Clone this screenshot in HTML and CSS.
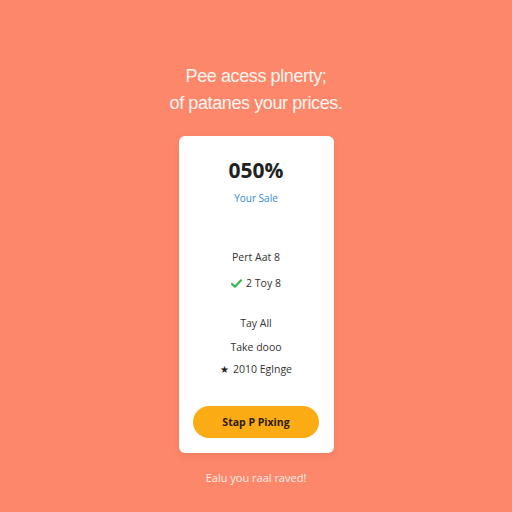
FILE: index.html
```html
<!DOCTYPE html>
<html>
<head>
<meta charset="utf-8">
<link rel="stylesheet" href="styles.css">
</head>
<body>
<main class="page">
  <h1 class="headline">Pee acess plnerty;<br>of patanes your prices.</h1>
  <section class="card">
    <div class="price">050%</div>
    <div class="sale">Your Sale</div>
    <ul class="list first">
      <li>Pert Aat 8</li>
      <li><svg class="check" viewBox="0 0 12 10" width="11" height="9"><path d="M1 5.5 L4.2 8.5 L11 1.5" fill="none" stroke="#3bb54a" stroke-width="2.4" stroke-linecap="round" stroke-linejoin="round"/></svg>2 Toy 8</li>
    </ul>
    <ul class="list second">
      <li>Tay All</li>
      <li>Take dooo</li>
      <li class="tight"><span class="star">&#9733;</span>2010 Eglnge</li>
    </ul>
    <button class="cta">Stap P Pixing</button>
  </section>
  <p class="foot">Ealu you raal raved!</p>
</main>
</body>
</html>
```
FILE: styles.css
```css
html, body {
  margin: 0;
  padding: 0;
}
body {
  background: #fd876b;
  font-family: "Open Sans", "Liberation Sans", sans-serif;
  width: 512px;
  height: 512px;
  overflow: hidden;
}
.page {
  display: flex;
  flex-direction: column;
  align-items: center;
  padding-top: 63px;
}
.headline {
  margin: 0;
  color: #fff5f0;
  font-family: "Liberation Sans", Arial, sans-serif;
  font-weight: 400;
  font-size: 18px;
  letter-spacing: -0.4px;
  line-height: 27px;
  text-align: center;
}
.card {
  margin-top: 19px;
  width: 155px;
  height: 317px;
  background: #fff;
  border-radius: 6px;
  box-shadow: 0 2px 6px rgba(150, 60, 40, 0.15);
  display: flex;
  flex-direction: column;
  align-items: center;
  box-sizing: border-box;
  padding-top: 21px;
}
.price {
  font-size: 21px;
  font-weight: 700;
  color: #222;
  line-height: 26px;
}
.sale {
  margin-top: 8px;
  font-size: 10px;
  color: #2f8ad0;
  line-height: 14px;
}
.list {
  list-style: none;
  margin: 0;
  padding: 0;
  display: flex;
  flex-direction: column;
  align-items: center;
  font-size: 10.5px;
  color: #333;
}
.list li {
  display: flex;
  align-items: center;
  gap: 4px;
  line-height: 14px;
}
.first {
  margin-top: 45px;
  gap: 12px;
}
.second {
  margin-top: 26px;
  gap: 10px;
}
.second .tight {
  margin-top: -2px;
}
.check {
  display: block;
}
.star {
  font-size: 10px;
  color: #222;
}
.cta {
  margin-top: 30px;
  width: 126px;
  height: 32px;
  border: none;
  border-radius: 16px;
  background: #fbab13;
  color: #2a1a05;
  font-family: "Open Sans", "Liberation Sans", sans-serif;
  font-weight: 700;
  font-size: 10.5px;
}
.foot {
  margin: 18px 0 0;
  color: #fff0ea;
  font-size: 11px;
  line-height: 14px;
}
```
